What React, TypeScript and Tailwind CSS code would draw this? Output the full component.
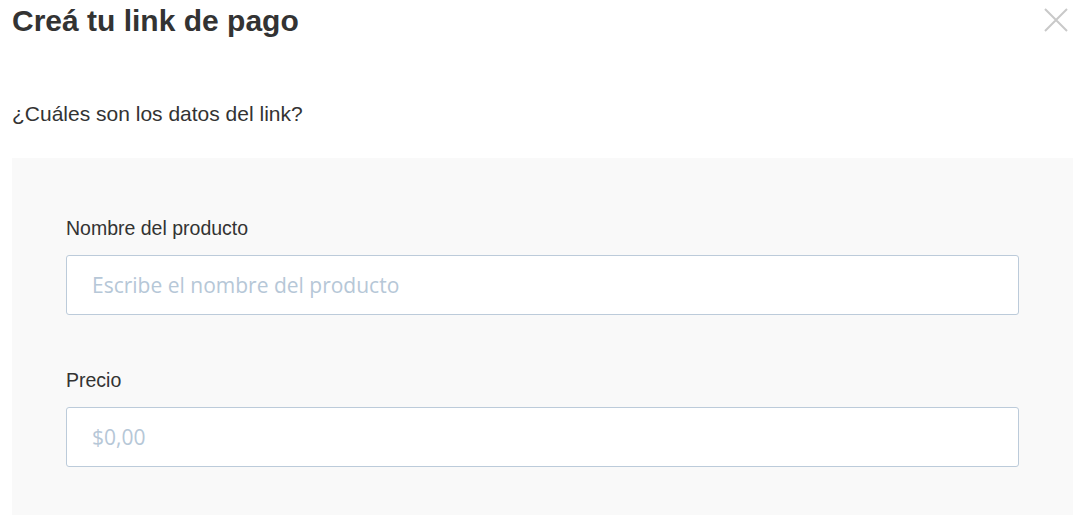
const Field = ({ label, placeholder }: { label: string; placeholder: string }) => (
  <div className="flex flex-col">
    <label className="text-[19.5px] leading-[24px] text-[#333]">{label}</label>
    <input
      className="mt-[15px] h-[60px] w-full rounded-[3px] border border-[#bccbda] bg-white px-[25px] font-['Open_Sans',sans-serif] text-[21px] text-[#333] outline-none placeholder:text-[#b6c7d7]"
      placeholder={placeholder}
    />
  </div>
);

export default function App() {
  return (
    <div className="h-[515px] w-[1080px] overflow-hidden bg-white font-['Liberation_Sans',Arial,sans-serif]">
      <div className="flex items-start justify-between pl-[12px] pr-[12px] pt-[3px]">
        <h1 className="text-[30px] font-bold leading-[36px] text-[#333]">Creá tu link de pago</h1>
        <button className="mt-[5px] text-[#c9c9c9]">
          <svg width="24" height="24" viewBox="0 0 24 24" fill="none" stroke="currentColor" strokeWidth="2">
            <path d="M1 1L23 23M23 1L1 23" />
          </svg>
        </button>
      </div>
      <p className="mt-[63px] pl-[12px] text-[21px] leading-[24px] text-[#333]">¿Cuáles son los datos del link?</p>
      <div className="ml-[12px] mr-[7px] mt-[32px] flex h-[400px] flex-col gap-[53px] bg-[#f9f9f9] pl-[54px] pr-[54px] pt-[58px]">
        <Field label="Nombre del producto" placeholder="Escribe el nombre del producto" />
        <Field label="Precio" placeholder="$0,00" />
      </div>
    </div>
  );
}
